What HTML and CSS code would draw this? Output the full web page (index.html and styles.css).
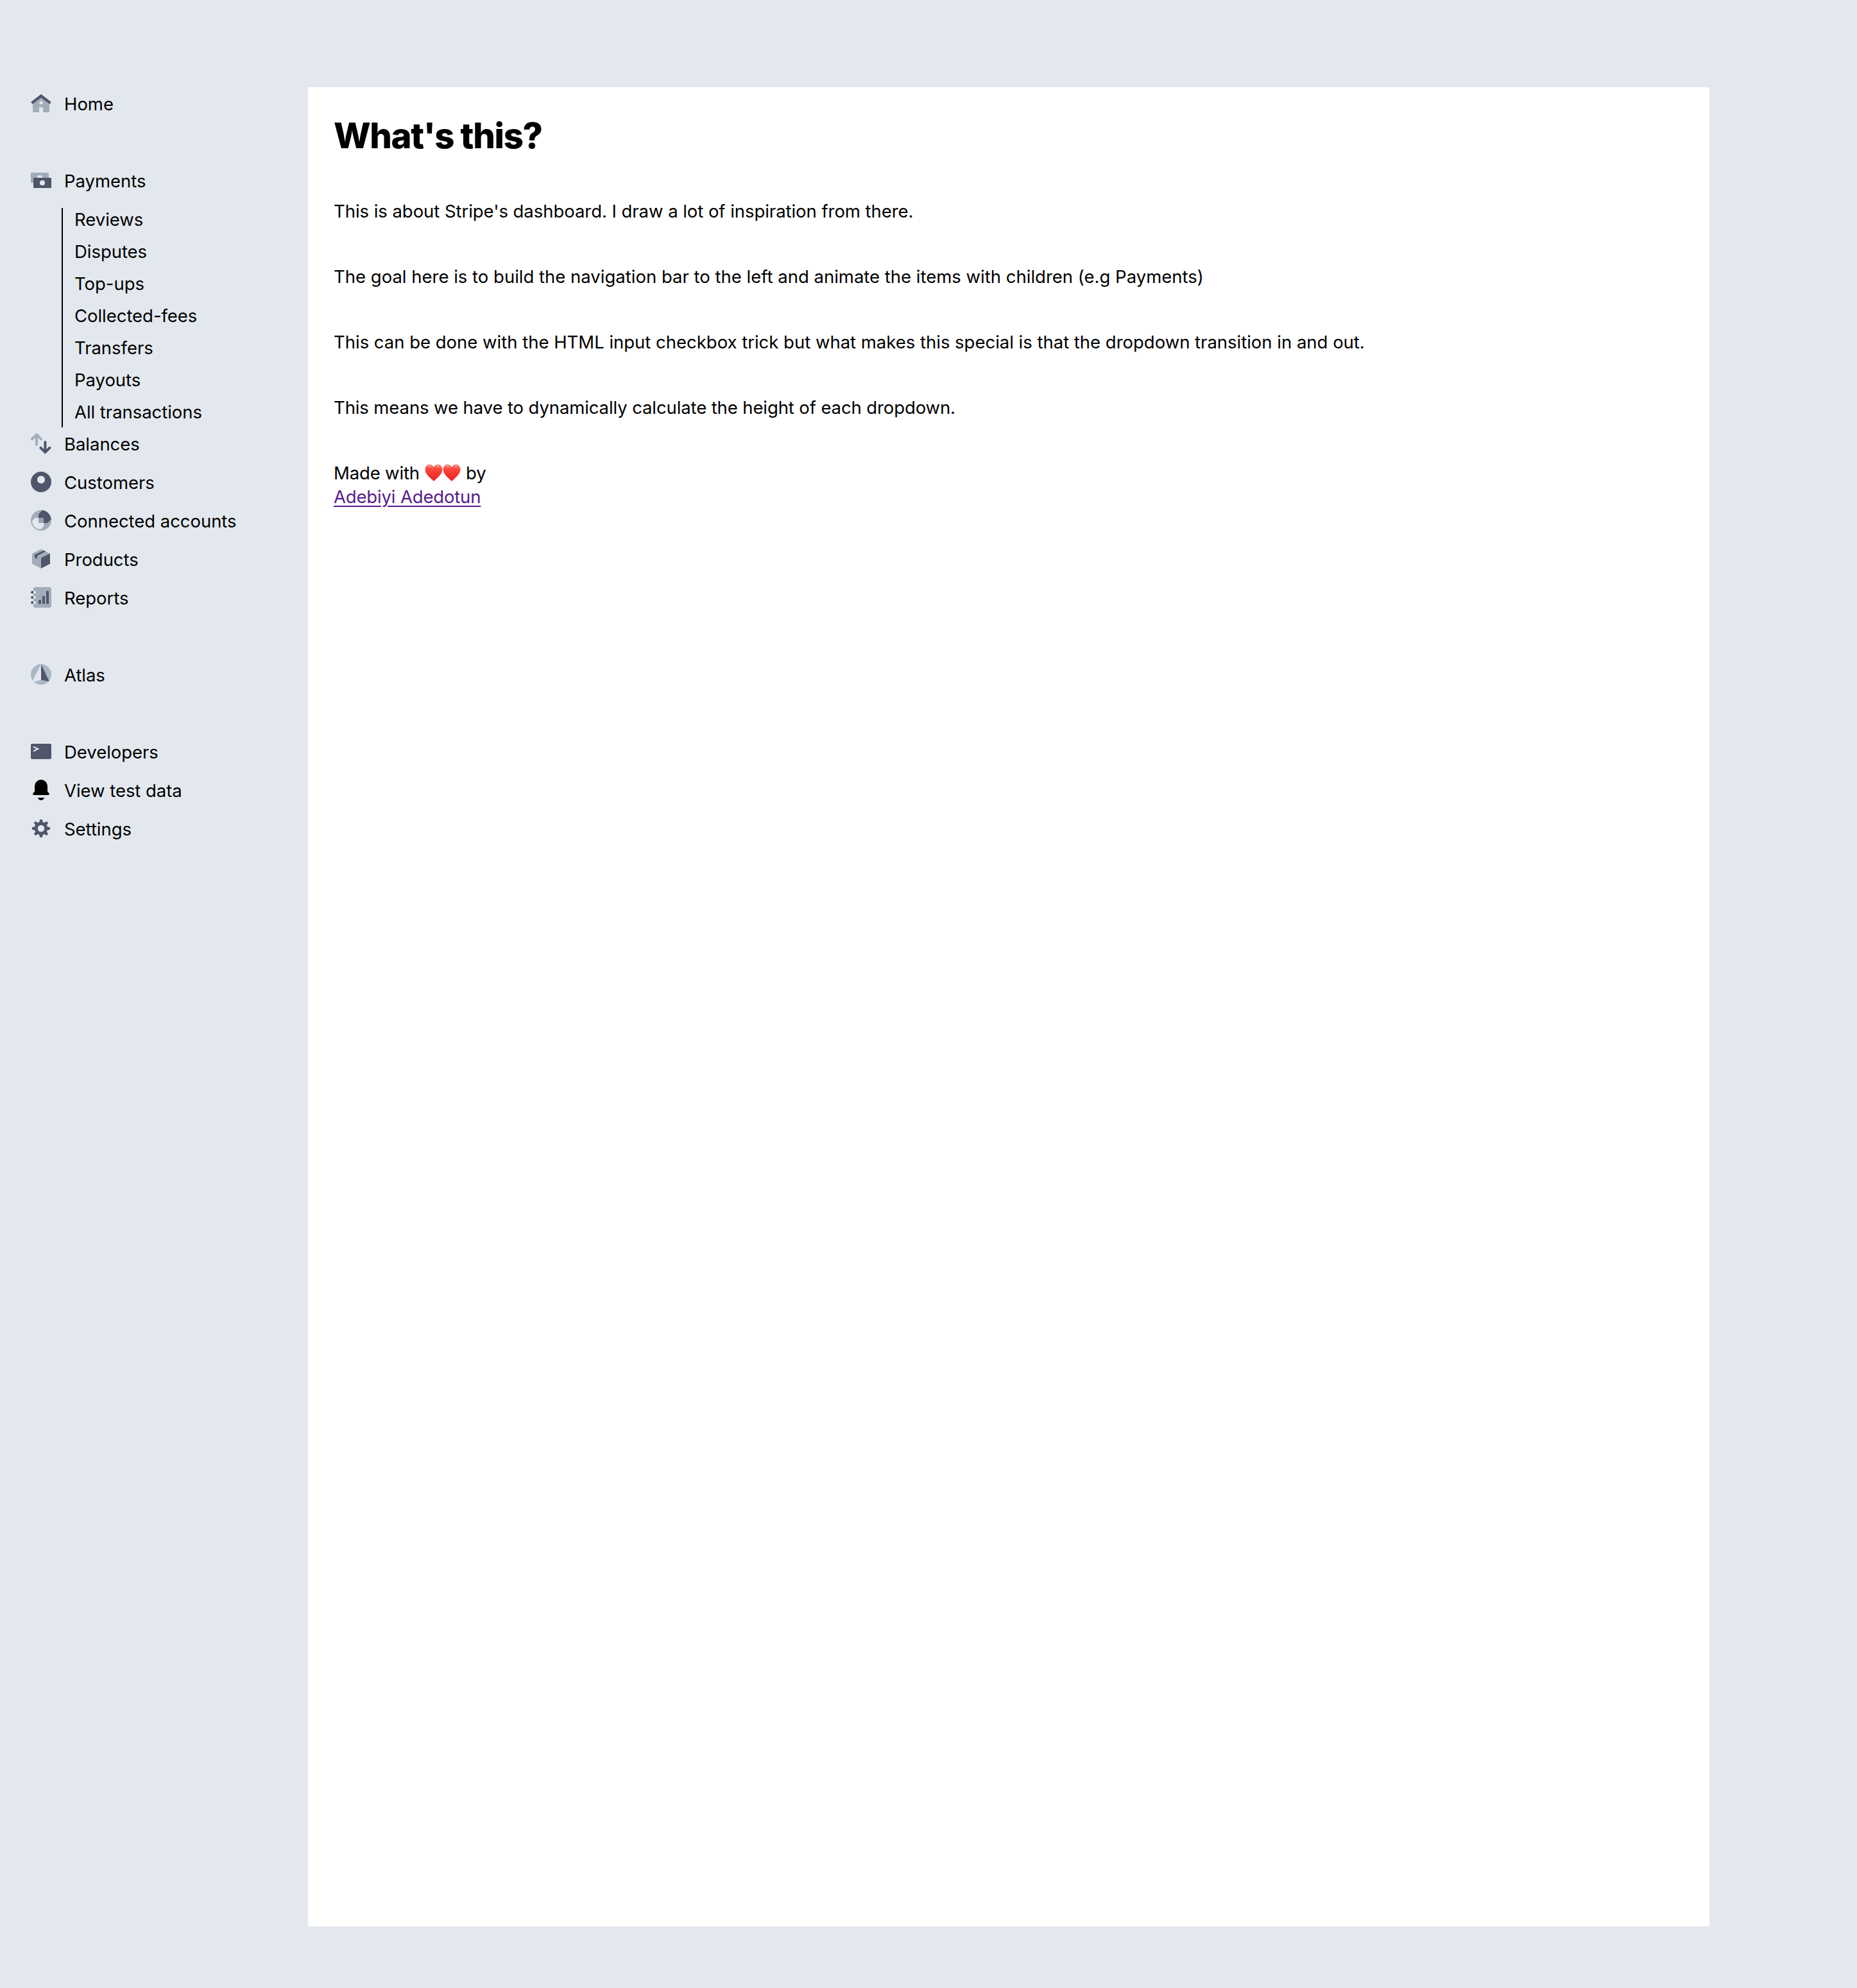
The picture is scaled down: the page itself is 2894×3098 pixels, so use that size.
FILE: index.html
```html
<!DOCTYPE html>
<html lang="en">
<head>
<meta charset="utf-8">
<title>Dashboard navigation</title>
<link rel="stylesheet" href="styles.css">
</head>
<body>
<div class="layout">
  <nav class="sidebar">
    <ul class="nav-group">
      <li class="nav-item">
        <svg class="icon" viewBox="0 0 16 16"><path class="light" fill-rule="evenodd" d="M8 2.4 14.5 7.6V14.5a.5.5 0 0 1-.5.5H9.5V11.5a.5.5 0 0 0-.5-.5H7a.5.5 0 0 0-.5.5V15H2a.5.5 0 0 1-.5-.5V7.6ZM8 6.2a1.3 1.3 0 1 0 0 2.6a1.3 1.3 0 0 0 0-2.6Z"/><path class="dark" d="M7.5 1.2a.8.8 0 0 1 1 0L15.6 6.7a.4.4 0 0 1 .1.5L15 8.3a.4.4 0 0 1-.6.1L8 3.6 1.6 8.4A.4.4 0 0 1 1 8.3L.3 7.200a.4.4 0 0 1 .1-.5Z"/></svg>
        <span>Home</span>
      </li>
    </ul>
    <ul class="nav-group">
      <li class="nav-item">
        <svg class="icon" viewBox="0 0 16 16"><rect class="light" y="2" width="14" height="8" rx=".6"/><circle class="ground" cx="7" cy="6" r="2"/><rect class="dark" x="2" y="6" width="14" height="8" rx=".6"/><circle class="ground" cx="9" cy="10" r="2"/></svg>
        <span>Payments</span>
      </li>
      <li class="nav-children">
        <ul class="submenu">
          <li>Reviews</li>
          <li>Disputes</li>
          <li>Top-ups</li>
          <li>Collected-fees</li>
          <li>Transfers</li>
          <li>Payouts</li>
          <li>All transactions</li>
        </ul>
      </li>
      <li class="nav-item">
        <svg class="icon" viewBox="0 0 16 16"><path class="stroke-light" d="M4.5 9V1.2M1 4.600 4.500 1.100 8 4.600"/><path class="stroke-dark" d="M11.200 7V14.800M7.700 11.400 11.200 14.900 14.700 11.400"/></svg>
        <span>Balances</span>
      </li>
      <li class="nav-item">
        <svg class="icon" viewBox="0 0 16 16"><circle class="dark" cx="8" cy="8" r="8"/><circle class="ground" cx="8" cy="6.200" r="3"/></svg>
        <span>Customers</span>
      </li>
      <li class="nav-item">
        <svg class="icon" viewBox="0 0 16 16"><circle class="light" cx="8" cy="8" r="8"/><path class="dark" d="M9 0A8 8 0 0 1 15.900 7L13 10H6V3.200Z"/><path class="ground" d="M3.300 6H10V12.700L7.300 15A7 7 0 0 1 1 8.500Z"/><path class="mid" d="M6 6h4v4H6z"/></svg>
        <span>Connected accounts</span>
      </li>
      <li class="nav-item">
        <svg class="icon" viewBox="0 0 16 16"><path class="light" d="M8 .4 15 3.900V11.700L8 15.400 1 11.700V3.900Z"/><path class="dark" d="M15 3.800V11.700L8 15.400V7.300Z"/><path class="dark" d="M3 4.800 10.300 1.400 11.700 2.100 5 5.500V8L3 6.900Z"/></svg>
        <span>Products</span>
      </li>
      <li class="nav-item">
        <svg class="icon" viewBox="0 0 16 16"><rect class="light" x="2" width="14" height="16" rx="1.500"/><path class="dark" d="M6 10h2v3H6zM9 7h2v6H9zM12 3h2v10h-2z"/><path class="dark" d="M1 3h1v2H1a1 1 0 0 1 0-2ZM1 7h1v2H1a1 1 0 0 1 0-2ZM1 11h1v2H1a1 1 0 0 1 0-2Z"/><path class="ground" d="M2 3h1a1 1 0 0 1 0 2H2ZM2 7h1a1 1 0 0 1 0 2H2ZM2 11h1a1 1 0 0 1 0 2H2Z"/></svg>
        <span>Reports</span>
      </li>
    </ul>
    <ul class="nav-group">
      <li class="nav-item">
        <svg class="icon" viewBox="0 0 16 16"><circle class="pale" cx="8" cy="8" r="8"/><path class="ground" d="M8 0 1.600 12.600 2.400 13.700 8 12.200Z"/><path class="dark" d="M8 0 14.400 13.500 8 12.200Z"/></svg>
        <span>Atlas</span>
      </li>
    </ul>
    <ul class="nav-group">
      <li class="nav-item">
        <svg class="icon" viewBox="0 0 16 16"><rect class="dark" y="2" width="16" height="12" rx="1"/><path class="prompt" d="M2.300 4.600 5.600 6 2.300 7.700"/></svg>
        <span>Developers</span>
      </li>
      <li class="nav-item">
        <svg class="icon" viewBox="0 0 16 16"><path d="M8 0a5 5 0 0 1 5 5V9.300L14.200 10.500a.9.900 0 0 1-.6 1.500H2.400a.9.900 0 0 1-.6-1.500L3 9.300V5a5 5 0 0 1 5-5ZM5.500 14h5A2.600 2.600 0 0 1 8 16 2.600 2.600 0 0 1 5.500 14Z"/></svg>
        <span>View test data</span>
      </li>
      <li class="nav-item">
        <svg class="icon" viewBox="0 0 16 16"><circle class="gear-ring" cx="8" cy="8" r="3.900"/><g class="dark"><path id="tooth" d="M6.500 4 7 1.400Q7.100 1 7.500 1H8.500Q8.900 1 9 1.400L9.500 4Z"/><use href="#tooth" transform="rotate(45 8 8)"/><use href="#tooth" transform="rotate(90 8 8)"/><use href="#tooth" transform="rotate(135 8 8)"/><use href="#tooth" transform="rotate(180 8 8)"/><use href="#tooth" transform="rotate(225 8 8)"/><use href="#tooth" transform="rotate(270 8 8)"/><use href="#tooth" transform="rotate(315 8 8)"/></g></svg>
        <span>Settings</span>
      </li>
    </ul>
  </nav>
  <main class="panel">
    <h1>What's this?</h1>
    <p>This is about Stripe's dashboard. I draw a lot of inspiration from there.</p>
    <p class="loose">The goal here is to build the navigation bar to the left and animate the items with children (e.g Payments)</p>
    <p class="even">This can be done with the HTML input checkbox trick but what makes this special is that the dropdown transition in and out.</p>
    <p class="tight">This means we have to dynamically calculate the height of each dropdown.</p>
    <div class="credit">
      <span class="credit-line">Made with
        <svg class="hearts" viewBox="0 0 56 28" role="img" aria-label="love">
          <defs>
            <linearGradient id="heart-fill" x1="0" y1="0" x2="0" y2="1"><stop offset="0" stop-color="#ff6a5c"/><stop offset=".35" stop-color="#ff4037"/><stop offset="1" stop-color="#e8221c"/></linearGradient>
            <linearGradient id="heart-shine" x1="0" y1="0" x2="0" y2="1"><stop offset="0" stop-color="#ffc2b8"/><stop offset="1" stop-color="#ff5a4e" stop-opacity="0"/></linearGradient>
          </defs>
          <g id="heart"><path fill="url(#heart-fill)" stroke="#d9352b" stroke-width=".6" d="M14 5.800C12.500 2.800 10.200 1.300 7.500 1.300C3.500 1.300 1 4.500 1 8.700C1 15.500 7 20 14 26.600C21 20 27 15.500 27 8.700C27 4.500 24.500 1.300 20.500 1.300C17.800 1.300 15.500 2.800 14 5.800Z"/><path fill="url(#heart-shine)" d="M3 7C3.500 3.500 5.500 2.300 7.500 2.300C9.800 2.300 11.500 3.500 12.500 5.800C9.500 4.300 6 4.500 3 7ZM25 7C24.500 3.500 22.500 2.300 20.500 2.300C18.200 2.300 16.500 3.500 15.500 5.800C18.500 4.300 22 4.500 25 7Z"/></g>
          <use href="#heart" x="28"/>
        </svg>
        by</span>
      <a class="author" href="#">Adebiyi Adedotun</a>
    </div>
  </main>
</div>
</body>
</html>
```

FILE: styles.css
```css
* {
  box-sizing: border-box;
  margin: 0;
  padding: 0;
}

body {
  background: #e3e8ee;
  color: #000;
  font-family: Inter, "Noto Sans", sans-serif;
  font-size: 27.5px;
  line-height: 34px;
}

ul {
  list-style: none;
}

.layout {
  display: flex;
  min-height: 3098px;
  padding: 136px 230px 96px 48px;
}

.sidebar {
  display: flex;
  flex: none;
  flex-direction: column;
  gap: 60px;
  width: 432px;
  padding-top: 9px;
  letter-spacing: -0.04px;
}

.nav-group {
  display: flex;
  flex-direction: column;
}

.nav-item {
  display: flex;
  align-items: center;
  gap: 20px;
  height: 32px;
  margin-bottom: 28px;
}

.nav-item span {
  padding-top: 2px;
}

.nav-children {
  margin: -9px 0 9px 48px;
  padding-top: 8px;
}

.submenu {
  height: 342px;
  border-left: 2px solid #000;
  padding: 1px 0 0 18px;
}

.submenu li {
  margin-bottom: 16px;
}

.icon {
  flex: none;
  width: 32px;
  height: 32px;
}

.dark {
  fill: #4f566b;
}

.light {
  fill: #a3acb9;
}

.pale {
  fill: #a9b8c5;
}

.mid {
  fill: #9aa3b2;
}

.ground {
  fill: #e3e8ee;
}

.stroke-light,
.stroke-dark {
  fill: none;
  stroke: #a3acb9;
  stroke-width: 2;
  stroke-linecap: round;
  stroke-linejoin: round;
}

.stroke-dark {
  stroke: #4f566b;
}

.prompt {
  fill: none;
  stroke: #e3e8ee;
  stroke-width: 1;
  stroke-linecap: round;
}

.gear-ring {
  fill: none;
  stroke: #4f566b;
  stroke-width: 2.5;
}

.panel {
  flex: 1;
  padding: 40px;
  background: #fff;
}

h1 {
  margin-bottom: 66px;
  font-size: 54.5px;
  font-weight: 800;
  line-height: 70px;
  letter-spacing: -1.35px;
}

p {
  margin-bottom: 68px;
  letter-spacing: -0.048px;
}

.loose {
  letter-spacing: 0;
}

.even {
  letter-spacing: -0.012px;
}

.tight {
  letter-spacing: -0.11px;
}

.credit {
  display: flex;
  flex-direction: column;
  align-items: flex-start;
  gap: 3px;
  letter-spacing: -0.16px;
}

.credit-line {
  height: 34px;
}

.hearts {
  width: 56px;
  height: 28px;
  margin-left: 1px;
  vertical-align: -4px;
}

.author {
  color: #551a8b;
  text-decoration-thickness: 2px;
  text-underline-offset: 4px;
}
```
